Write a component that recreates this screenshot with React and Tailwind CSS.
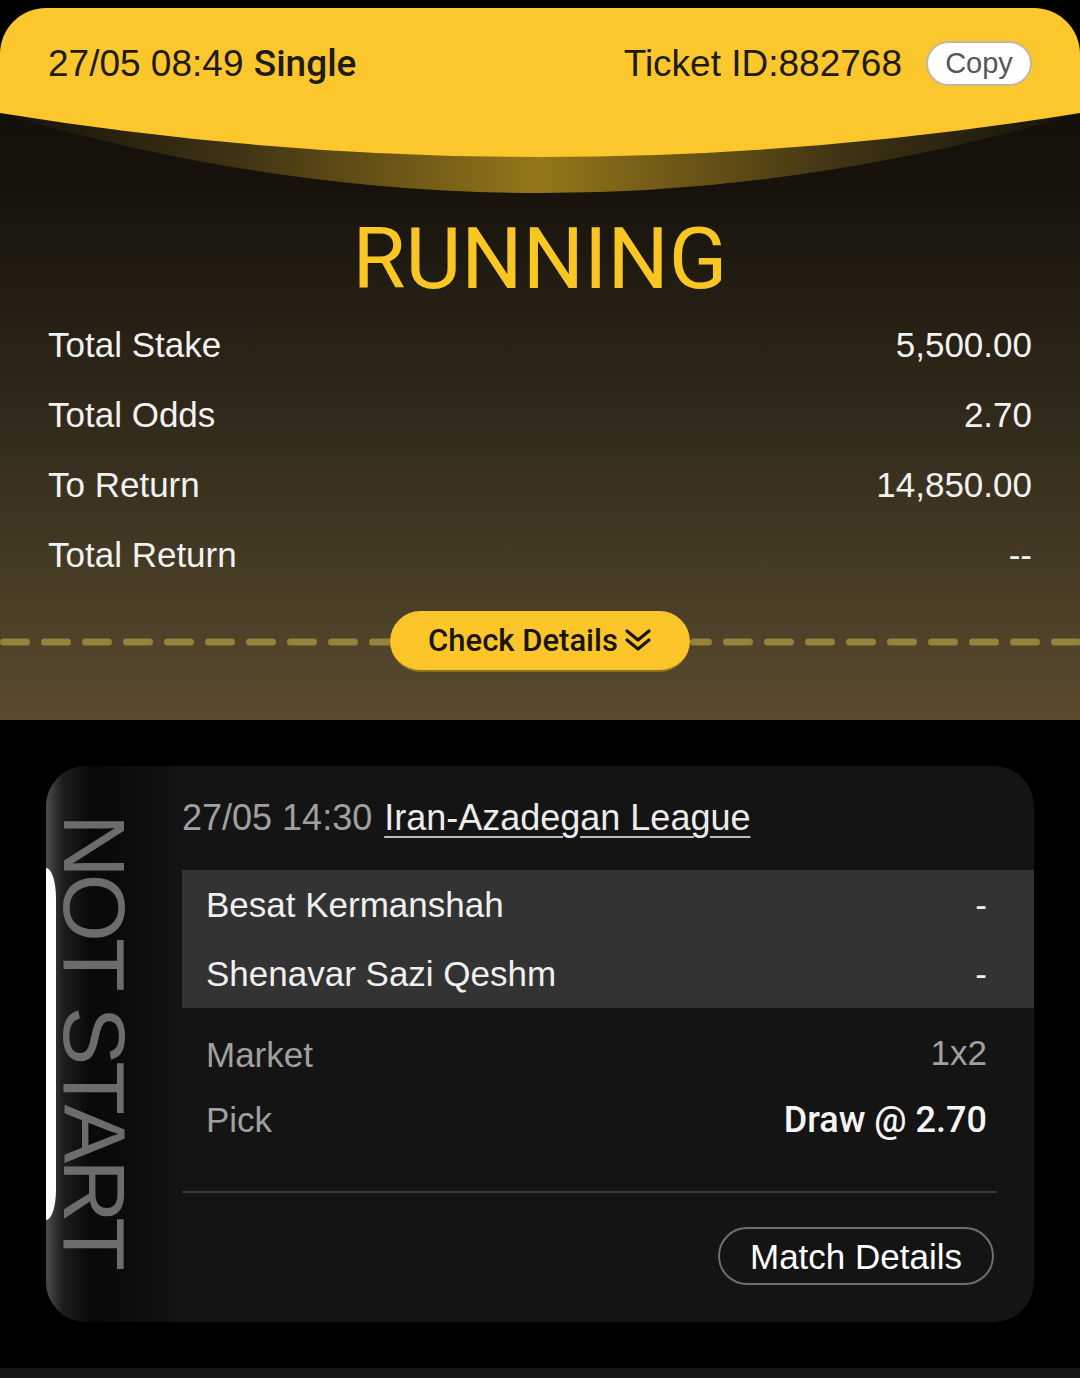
import React from "react";

const summary = [
  { label: "Total Stake", value: "5,500.00" },
  { label: "Total Odds", value: "2.70" },
  { label: "To Return", value: "14,850.00" },
  { label: "Total Return", value: "--" },
];

const teams = ["Besat Kermanshah", "Shenavar Sazi Qeshm"];

// medium weight text, Liberation has no 500
const medium = "font-['Roboto',Arial,sans-serif] font-medium";

// dashed divider drawn behind the check details pill
const DashLine = ({ offset = 0 }) => (
  <svg className="h-[8px] flex-1 block" preserveAspectRatio="none">
    <line
      x1="3.5"
      y1="4"
      x2="100%"
      y2="4"
      stroke="#96823a"
      strokeWidth="7"
      strokeLinecap="round"
      strokeDasharray="23 18"
      strokeDashoffset={offset}
    />
  </svg>
);

const DoubleChevron = () => (
  <svg
    width="28"
    height="28"
    viewBox="0 0 28 28"
    fill="none"
    stroke="currentColor"
    strokeWidth="3.2"
    strokeLinecap="round"
    strokeLinejoin="round"
  >
    <path d="M3 4 L14 13 L25 4" />
    <path d="M3 13 L14 22 L25 13" />
  </svg>
);

const HeaderCurve = () => (
  <svg
    viewBox="0 0 1080 85"
    preserveAspectRatio="none"
    className="block w-full h-[85px]"
  >
    <defs>
      <linearGradient id="band" x1="0" y1="0" x2="1" y2="0">
        <stop offset="0" stopColor="#15120b" />
        <stop offset="0.22" stopColor="#3f3314" />
        <stop offset="0.5" stopColor="#957619" />
        <stop offset="0.78" stopColor="#3f3314" />
        <stop offset="1" stopColor="#15120b" />
      </linearGradient>
    </defs>
    <path d="M0 0 L1080 0 Q540 160 0 0 Z" fill="url(#band)" />
    <path d="M0 0 L1080 0 Q540 88 0 0 Z" fill="#fcc72c" />
  </svg>
);

const App = () => {
  return (
    <div className="min-h-[1378px] bg-black pt-[8px] font-['Liberation_Sans',Arial,sans-serif]">
      <section className="rounded-t-[46px] overflow-hidden bg-[linear-gradient(180deg,#0d0b07_0%,#17130c_25%,#2f2819_55%,#5a4b2f_100%)]">
        <div className="h-[105px] bg-[#fcc72c] flex items-center justify-between pl-[48px] pr-[48px] pt-[6px] text-[#1e1b12]">
          <p className="text-[37px] leading-none">
            27/05 08:49 <span className={medium}>Single</span>
          </p>
          <div className="flex items-center">
            <span className="text-[37px] leading-none">Ticket ID:882768</span>
            <button className="ml-[24px] h-[45px] w-[106px] rounded-full bg-white border-2 border-[#c4b89a] text-[29px] leading-none text-[#565656]">
              Copy
            </button>
          </div>
        </div>
        <HeaderCurve />

        <div className="mt-[11px] h-[100px] flex items-center justify-center">
          <h1 className="font-['Roboto',Arial,sans-serif] text-[86px] leading-none text-[#f9c623]">
            RUNNING
          </h1>
        </div>

        <div className="px-[48px]">
          {summary.map((row) => (
            <div
              key={row.label}
              className="h-[70px] flex items-center justify-between text-[35px] leading-none text-[#f2f2f2]"
            >
              <span>{row.label}</span>
              <span>{row.value}</span>
            </div>
          ))}
        </div>

        <div className="mt-[22px] h-[61px] flex items-center">
          <DashLine />
          <button
            className={`${medium} w-[300px] h-[61px] rounded-full bg-[#fcc62a] border-b-2 border-[#8a7020] flex items-center justify-center gap-[6px] text-[31px] leading-none text-[#1a1508]`}
          >
            Check Details
            <DoubleChevron />
          </button>
          <DashLine offset={8} />
        </div>
        <div className="h-[48px]" />
      </section>

      <div className="mt-[46px] mx-[46px] h-[556px] rounded-[40px] bg-[#141414] overflow-hidden flex relative">
        <div className="absolute left-0 top-[102px] w-[10px] h-[352px] bg-white rounded-tr-[10px_30px] rounded-br-[10px_30px]" />
        <div className="w-[136px] shrink-0 pl-[4px] pt-[48px] bg-[linear-gradient(90deg,#4d4d4d_0%,#1e1e1e_12%,#090909_32%,#0b0b0b_55%,#141414_100%)]">
          <span className="[writing-mode:vertical-rl] text-[88px] leading-none tracking-[-4px] text-[#6c6c6c] whitespace-nowrap">
            NOT START
          </span>
        </div>

        <div className="flex-1 flex flex-col pt-[32px]">
          <div className="h-[40px] flex items-center text-[36px] leading-none">
            <span className="text-[#a0a0a0]">27/05 14:30</span>
            <span className="ml-[12px] text-[#ececec] underline decoration-2 underline-offset-[6px] decoration-[#bdbdbd]">
              Iran-Azadegan League
            </span>
          </div>

          <div className="mt-[32px] bg-[#333333] pl-[24px] pr-[47px]">
            {teams.map((t) => (
              <div
                key={t}
                className="h-[69px] flex items-center justify-between text-[35px] leading-none text-[#f0f0f0]"
              >
                <span>{t}</span>
                <span>-</span>
              </div>
            ))}
          </div>

          <div className="mt-[14px] pl-[24px] pr-[47px] text-[35px] leading-none">
            <div className="h-[65px] flex items-center justify-between">
              <span className="text-[#a0a0a0]">Market</span>
              <span className="text-[#a0a0a0] -mt-[5px]">1x2</span>
            </div>
            <div className="h-[65px] flex items-center justify-between">
              <span className="text-[#a0a0a0]">Pick</span>
              <span className={`${medium} text-[36px] text-[#f4f4f4]`}>
                Draw @ 2.70
              </span>
            </div>
          </div>

          <div className="mt-[39px] mr-[37px] h-[2px] bg-[#3a3a3a]" />

          <button className="mt-[34px] mr-[40px] self-end h-[58px] w-[276px] rounded-full border-2 border-[#6e6e6e] text-[35px] leading-none text-white">
            Match Details
          </button>
        </div>
      </div>

      <div className="h-[46px]" />
      <div className="h-[10px] bg-[#171717]" />
    </div>
  );
};

export default App;
